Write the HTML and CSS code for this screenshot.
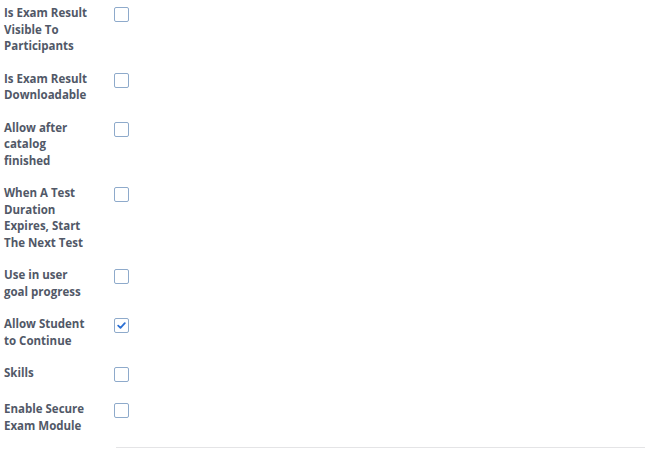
FILE: index.html
```html
<!DOCTYPE html>
<html>
<head>
<meta charset="utf-8">
<link rel="stylesheet" href="styles.css">
</head>
<body>
<div class="form">
  <div class="row"><div class="label">Is Exam Result<br>Visible To<br>Participants</div><div class="control"><span class="box"></span></div></div>
  <div class="row"><div class="label">Is Exam Result<br>Downloadable</div><div class="control"><span class="box"></span></div></div>
  <div class="row"><div class="label">Allow after<br>catalog<br>finished</div><div class="control"><span class="box"></span></div></div>
  <div class="row"><div class="label">When A Test<br>Duration<br>Expires, Start<br>The Next Test</div><div class="control"><span class="box"></span></div></div>
  <div class="row"><div class="label">Use in user<br>goal progress</div><div class="control"><span class="box"></span></div></div>
  <div class="row"><div class="label">Allow Student<br>to Continue</div><div class="control"><span class="box checked"><svg width="9" height="9" viewBox="0 0 9 9"><path d="M1.2 4.6 L3.5 6.8 L7.8 2.2" fill="none" stroke="#2a6fd4" stroke-width="1.8" stroke-linecap="round" stroke-linejoin="round"/></svg></span></div></div>
  <div class="row"><div class="label">Skills</div><div class="control"><span class="box"></span></div></div>
  <div class="row last"><div class="label">Enable Secure<br>Exam Module</div><div class="control"><span class="box"></span></div></div>
  <div class="divider"></div>
</div>
</body>
</html>
```

FILE: styles.css
```css
html, body {
  margin: 0;
  padding: 0;
  background: #ffffff;
}
.form {
  padding: 5px 4px 0 4px;
  font-family: "Open Sans", "Liberation Sans", sans-serif;
  font-weight: 700;
  font-size: 11.5px;
  line-height: 16.5px;
  color: #515867;
}
.row {
  display: grid;
  grid-template-columns: 110px 1fr;
  margin-bottom: 16px;
}
.row.last {
  margin-bottom: 13px;
}
.control {
  min-height: 18px;
  padding-top: 2px;
}
.box {
  display: flex;
  align-items: center;
  justify-content: center;
  box-sizing: border-box;
  width: 15px;
  height: 15px;
  border: 1.5px solid #8eaacb;
  border-radius: 2px;
  background: #fff;
}
.divider {
  margin-left: 112px;
  height: 1px;
  background: #e4e4e6;
}
```
